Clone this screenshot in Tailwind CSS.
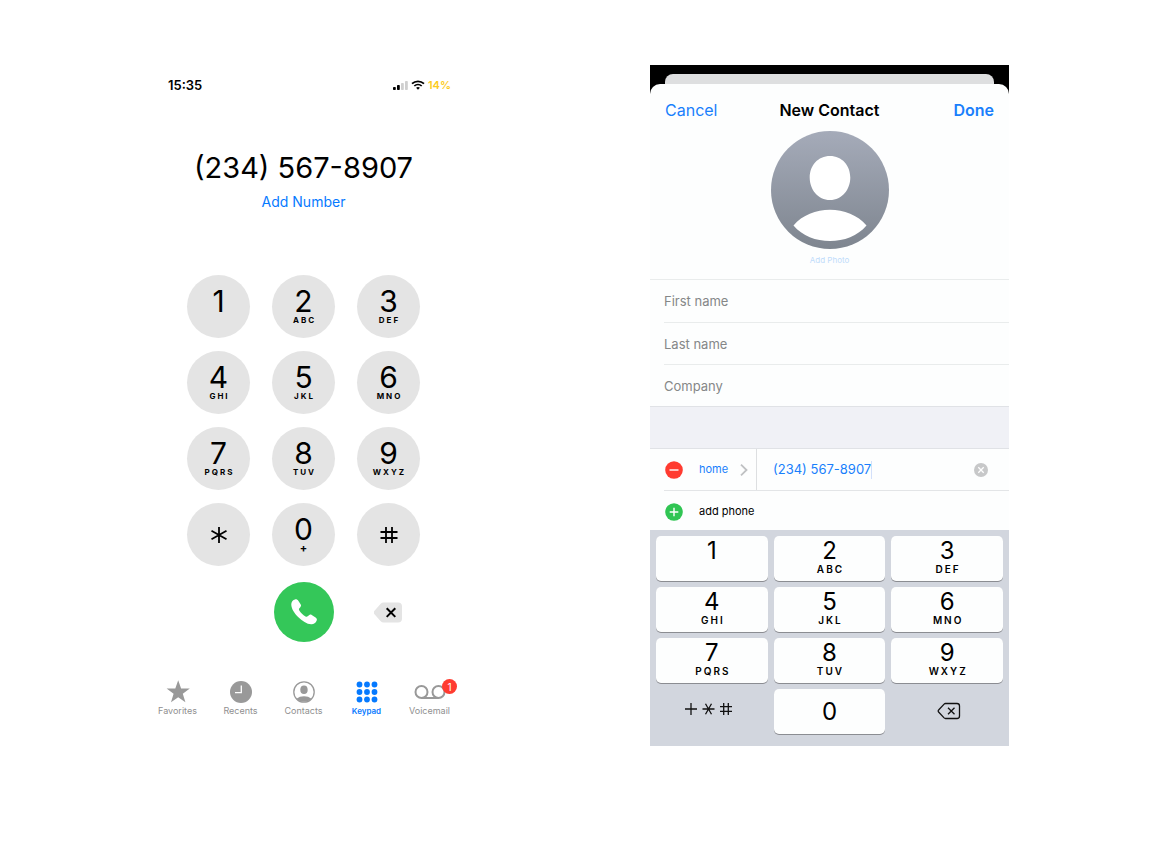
<!DOCTYPE html>
<html lang="en">
<head>
<meta charset="utf-8">
<meta name="viewport" content="width=device-width, initial-scale=1">
<title>Phone keypad and new contact</title>
<script src="https://cdn.jsdelivr.net/npm/@tailwindcss/browser@4"></script>
</head>
<body class="bg-white font-['Inter',sans-serif] text-black">
<main class="flex flex-wrap justify-center gap-x-[189px] gap-y-12 py-[65px]">

  <!-- Dialer -->
  <section class="flex w-full max-w-[315px] flex-col" aria-label="Keypad">
    <header class="flex items-center justify-between pt-3 pr-[10px] pl-[22px] text-[13px] leading-4 font-semibold">
      <time>15:35</time>
      <div class="flex items-center gap-[3px]">
        <svg class="h-[10px] w-4" viewBox="0 0 16 10" aria-hidden="true">
          <rect x="1" y="7" width="2.8" height="3" rx=".8"/><rect x="5" y="5" width="2.8" height="5" rx=".8"/>
          <rect x="9" y="3" width="2.8" height="7" rx=".8" fill="#cfcfcf"/><rect x="13" y="1" width="2.8" height="9" rx=".8" fill="#cfcfcf"/>
        </svg>
        <svg class="h-[10px] w-[14px]" viewBox="0 0 14 10" fill="none" stroke="#000" aria-hidden="true">
          <path d="M1 3.7C4.4.5 9.6.5 13 3.7" stroke-width="1.8"/><path d="M3.3 6c2.1-2 5.3-2 7.4 0" stroke-width="1.7"/><path d="M5.1 7.8c1.1-1 2.7-1 3.8 0L7 9.8z" fill="#000" stroke="none"/>
        </svg>
        <span class="text-[11px] text-[#fccb1d]">14%</span>
      </div>
    </header>

    <div class="mt-[57px] text-center">
      <p class="text-[29px] leading-9">(234) 567-8907</p>
      <button class="mt-[6px] block w-full text-sm leading-5 text-[#067aff]">Add Number</button>
    </div>

    <div class="mt-[63px] grid grid-cols-[repeat(3,63px)] justify-center gap-x-[22px] gap-y-[13px]">
      <button class="flex h-[63px] flex-col items-center rounded-full bg-[#e4e4e4] pt-[11px] text-[30px] leading-[30px]">1</button>
      <button class="flex h-[63px] flex-col items-center rounded-full bg-[#e4e4e4] pt-[11px] text-[30px] leading-[30px]">2<span class="pl-[2px] text-[8px] leading-2 font-bold tracking-[2px]">ABC</span></button>
      <button class="flex h-[63px] flex-col items-center rounded-full bg-[#e4e4e4] pt-[11px] text-[30px] leading-[30px]">3<span class="pl-[2px] text-[8px] leading-2 font-bold tracking-[2px]">DEF</span></button>
      <button class="flex h-[63px] flex-col items-center rounded-full bg-[#e4e4e4] pt-[11px] text-[30px] leading-[30px]">4<span class="pl-[2px] text-[8px] leading-2 font-bold tracking-[2px]">GHI</span></button>
      <button class="flex h-[63px] flex-col items-center rounded-full bg-[#e4e4e4] pt-[11px] text-[30px] leading-[30px]">5<span class="pl-[2px] text-[8px] leading-2 font-bold tracking-[2px]">JKL</span></button>
      <button class="flex h-[63px] flex-col items-center rounded-full bg-[#e4e4e4] pt-[11px] text-[30px] leading-[30px]">6<span class="pl-[2px] text-[8px] leading-2 font-bold tracking-[2px]">MNO</span></button>
      <button class="flex h-[63px] flex-col items-center rounded-full bg-[#e4e4e4] pt-[11px] text-[30px] leading-[30px]">7<span class="pl-[2px] text-[8px] leading-2 font-bold tracking-[2px]">PQRS</span></button>
      <button class="flex h-[63px] flex-col items-center rounded-full bg-[#e4e4e4] pt-[11px] text-[30px] leading-[30px]">8<span class="pl-[2px] text-[8px] leading-2 font-bold tracking-[2px]">TUV</span></button>
      <button class="flex h-[63px] flex-col items-center rounded-full bg-[#e4e4e4] pt-[11px] text-[30px] leading-[30px]">9<span class="pl-[2px] text-[8px] leading-2 font-bold tracking-[2px]">WXYZ</span></button>
      <button class="flex h-[63px] items-center justify-center rounded-full bg-[#e4e4e4]" aria-label="Star">
        <svg class="size-[18px]" viewBox="0 0 18 18" stroke="#000" stroke-width="1.8" aria-hidden="true"><path d="M9 1v16M1.500 4.700l15 8.600M16.500 4.700l-15 8.600"/></svg>
      </button>
      <button class="flex h-[63px] flex-col items-center rounded-full bg-[#e4e4e4] pt-[11px] text-[30px] leading-[30px]">0<span class="text-[11px] leading-2 font-bold">+</span></button>
      <button class="flex h-[63px] items-center justify-center rounded-full bg-[#e4e4e4]" aria-label="Pound">
        <svg class="size-[18px]" viewBox="0 0 18 18" stroke="#000" stroke-width="1.8" aria-hidden="true"><path d="M6 1v16M12 1v16M.5 6h17M.5 12h17"/></svg>
      </button>
    </div>

    <div class="mt-4 grid grid-cols-[repeat(3,63px)] items-center justify-center gap-x-[22px]">
      <button class="col-start-2 flex size-[60px] items-center justify-center justify-self-center rounded-full bg-[#34c759]" aria-label="Call">
        <svg class="size-[26px]" viewBox="0 0 26 26" fill="#fff" aria-hidden="true"><path d="M.3 5C.4 2.700 2 .8 4 .4c1.400-.3 2.500.2 3.300 1.400l2.300 3.500c.7 1.100.5 2-.3 2.900L8.400 9.200c-.6.7-.6 1.400-.1 2.200 1.500 2.400 3.600 4.400 6.200 6 .8.5 1.500.5 2.200-.1l1.300-1.100c.8-.7 1.700-.8 2.700-.2l3.900 2.400c1.300.8 1.600 1.900 1 3.300-.9 2.300-3 3.800-5.500 3.600-4.200-.4-9-3.400-13-7.400C3 13.800.1 9 .3 5Z"/></svg>
      </button>
      <button class="flex justify-center pr-[2px]" aria-label="Delete">
        <svg class="h-[21px] w-7" viewBox="0 0 28 21" aria-hidden="true"><path d="M9.500.5H24a4 4 0 0 1 4 4v12a4 4 0 0 1-4 4H9.500a4 4 0 0 1-2.800-1.200L.7 12.400a2.700 2.700 0 0 1 0-3.800l6-6.900A4 4 0 0 1 9.500.5Z" fill="#e4e4e4"/><path d="m12.700 6.300 8.600 8.600m0-8.600-8.600 8.600" stroke="#000" stroke-width="2"/></svg>
      </button>
    </div>

    <nav class="mt-[38px] grid grid-cols-5 text-center text-[9px] leading-3 text-[#8f8f8f]" aria-label="Tabs">
      <a href="#favorites" class="flex flex-col items-center gap-[1px]">
        <svg class="size-6" viewBox="0 0 24 24" fill="#999" aria-hidden="true"><path d="m12.200.2 2.900 8.300 8.700.1-7 5.200 2.600 8.500-7.200-5-7.200 5 2.600-8.500-7-5.200 8.700-.1z"/></svg>Favorites</a>
      <a href="#recents" class="flex flex-col items-center gap-[1px]">
        <svg class="size-6" viewBox="0 0 24 24" aria-hidden="true"><circle cx="12" cy="12" r="11" fill="#999"/><path d="M12.300 5.500v7.200H6" fill="none" stroke="#fff" stroke-width="1.300"/></svg>Recents</a>
      <a href="#contacts" class="flex flex-col items-center gap-[1px]">
        <svg class="size-6" viewBox="0 0 24 24" aria-hidden="true"><circle cx="12" cy="12" r="10.200" fill="none" stroke="#999" stroke-width="1.300"/><ellipse cx="12" cy="9.800" rx="3.700" ry="4.300" fill="#999"/><path d="M4.700 18.600c3.500-3.300 11.100-3.300 14.600 0A9.800 9.800 0 0 1 4.700 18.600Z" fill="#999"/></svg>Contacts</a>
      <a href="#keypad" class="flex flex-col items-center gap-[1px] text-[8px] leading-3 font-semibold text-[#067aff]" aria-current="page">
        <svg class="size-6" viewBox="0 0 24 24" fill="#067aff" aria-hidden="true"><circle cx="4.500" cy="4.500" r="2.900"/><circle cx="12" cy="4.500" r="2.900"/><circle cx="19.500" cy="4.500" r="2.900"/><circle cx="4.500" cy="12" r="2.900"/><circle cx="12" cy="12" r="2.900"/><circle cx="19.500" cy="12" r="2.900"/><circle cx="4.500" cy="19.500" r="2.900"/><circle cx="12" cy="19.500" r="2.900"/><circle cx="19.500" cy="19.500" r="2.900"/></svg>Keypad</a>
      <a href="#voicemail" class="relative flex flex-col items-center gap-[1px]">
        <svg class="h-6 w-8" viewBox="0 0 32 24" fill="none" stroke="#999" stroke-width="2" aria-hidden="true"><circle cx="7.500" cy="12" r="6"/><circle cx="24.500" cy="12" r="6"/><path d="M7.500 18h17"/></svg>Voicemail
        <span class="absolute -top-[1px] right-1 flex size-[15px] items-center justify-center rounded-full bg-[#ff3b30] text-[10px] text-white">1</span></a>
    </nav>
  </section>

  <!-- New contact sheet -->
  <section class="w-full max-w-[359px] bg-black pt-[9px]" aria-label="New Contact">
    <div class="mx-[15px] h-[10px] rounded-t-lg bg-[#dedfe0]"></div>
    <form class="rounded-t-[10px] bg-[#fdfefe]">
      <header class="grid grid-cols-3 items-center px-[15px] pt-[14px] text-base leading-6">
        <button type="button" class="justify-self-start text-[#197ffc]">Cancel</button>
        <h1 class="text-center font-semibold whitespace-nowrap">New Contact</h1>
        <button type="submit" class="justify-self-end font-semibold text-[#197ffc]">Done</button>
      </header>
      <div class="flex flex-col items-center gap-[7px] pt-[9px] pb-[15px]">
        <svg class="size-[118px]" viewBox="0 0 118 118" role="img" aria-label="Contact photo">
          <defs><linearGradient id="avatar" x2="0" y2="1"><stop stop-color="#a5abb9"/><stop offset="1" stop-color="#7e858f"/></linearGradient></defs>
          <circle cx="59" cy="59" r="59" fill="url(#avatar)"/>
          <path d="M59 25c12 0 20.300 9.500 20.300 21.500S71 69 59 69s-20.300-10.500-20.300-22.500S47 25 59 25ZM22.500 94.500C40 73.500 78 73.500 95.500 94.500 78 115.300 40 115.300 22.500 94.500Z" fill="#fff"/>
        </svg>
        <button type="button" class="text-[8px] leading-2 text-[#bfdcfb]">Add Photo</button>
      </div>

      <div class="border-t border-[#e9ecec] pl-[14px] text-[13px]">
        <input aria-label="First name" placeholder="First name" class="block h-[42px] w-full outline-none placeholder:text-[#858788]">
        <input aria-label="Last name" placeholder="Last name" class="block h-[42px] w-full border-t border-[#e9ecec] outline-none placeholder:text-[#858788]">
        <input aria-label="Company" placeholder="Company" class="block h-[42px] w-full border-t border-[#e9ecec] outline-none placeholder:text-[#858788]">
      </div>
      <div class="h-[43px] border-y border-[#e0e2e6] bg-[#f0f1f6]"></div>

      <div class="pl-[14px]">
        <div class="flex h-[42px] items-center border-b border-[#e3e5e7]">
          <button type="button" aria-label="Remove phone"><svg class="size-5" viewBox="0 0 20 20" aria-hidden="true"><circle cx="10" cy="10" r="8.800" fill="#ff3b30"/><path d="M5.500 10h9" stroke="#fff" stroke-width="1.400"/></svg></button>
          <button type="button" class="ml-[15px] flex w-[49px] items-center justify-between text-[11px] text-[#197ffc]">home
            <svg class="h-3 w-2" viewBox="0 0 8 12" fill="none" stroke="#bfc1c3" stroke-width="1.800" aria-hidden="true"><path d="m1 .7 5.500 5.300L1 11.300"/></svg></button>
          <div class="ml-2 flex flex-1 items-center self-stretch border-l border-[#dddfe1] pl-4">
            <input type="tel" aria-label="Phone" value="(234) 567-8907" class="field-sizing-content text-[13px] text-[#197ffc] outline-none">
            <span class="h-[18px] w-px bg-[#d3e0fa]"></span>
          </div>
          <button type="button" class="mr-5" aria-label="Clear text"><svg class="size-4" viewBox="0 0 16 16" aria-hidden="true"><circle cx="8" cy="8" r="7" fill="#c7c8c9"/><path d="m5.300 5.300 5.400 5.400m0-5.400-5.400 5.400" stroke="#fff" stroke-width="1.300"/></svg></button>
        </div>
        <button type="button" class="flex h-[39px] items-center gap-[15px] pt-[2px] text-[11px]">
          <svg class="size-5" viewBox="0 0 20 20" aria-hidden="true"><circle cx="10" cy="10" r="8.800" fill="#30c553"/><path d="M5.700 10h8.600M10 5.700v8.600" stroke="#fff" stroke-width="1.400"/></svg>add phone</button>
      </div>

      <div class="grid grid-cols-3 gap-[6px] bg-[#d2d6de] px-[6px] pt-[6px] pb-3">
        <button type="button" class="flex h-[45px] flex-col items-center rounded-[5px] bg-[#fdfefe] pt-[3px] text-2xl leading-6 shadow-[0_1px_0_#8b8d92]">1</button>
        <button type="button" class="flex h-[45px] flex-col items-center rounded-[5px] bg-[#fdfefe] pt-[3px] text-2xl leading-6 shadow-[0_1px_0_#8b8d92]">2<span class="pl-[2px] text-[10px] leading-3 font-semibold tracking-[2px]">ABC</span></button>
        <button type="button" class="flex h-[45px] flex-col items-center rounded-[5px] bg-[#fdfefe] pt-[3px] text-2xl leading-6 shadow-[0_1px_0_#8b8d92]">3<span class="pl-[2px] text-[10px] leading-3 font-semibold tracking-[2px]">DEF</span></button>
        <button type="button" class="flex h-[45px] flex-col items-center rounded-[5px] bg-[#fdfefe] pt-[3px] text-2xl leading-6 shadow-[0_1px_0_#8b8d92]">4<span class="pl-[2px] text-[10px] leading-3 font-semibold tracking-[2px]">GHI</span></button>
        <button type="button" class="flex h-[45px] flex-col items-center rounded-[5px] bg-[#fdfefe] pt-[3px] text-2xl leading-6 shadow-[0_1px_0_#8b8d92]">5<span class="pl-[2px] text-[10px] leading-3 font-semibold tracking-[2px]">JKL</span></button>
        <button type="button" class="flex h-[45px] flex-col items-center rounded-[5px] bg-[#fdfefe] pt-[3px] text-2xl leading-6 shadow-[0_1px_0_#8b8d92]">6<span class="pl-[2px] text-[10px] leading-3 font-semibold tracking-[2px]">MNO</span></button>
        <button type="button" class="flex h-[45px] flex-col items-center rounded-[5px] bg-[#fdfefe] pt-[3px] text-2xl leading-6 shadow-[0_1px_0_#8b8d92]">7<span class="pl-[2px] text-[10px] leading-3 font-semibold tracking-[2px]">PQRS</span></button>
        <button type="button" class="flex h-[45px] flex-col items-center rounded-[5px] bg-[#fdfefe] pt-[3px] text-2xl leading-6 shadow-[0_1px_0_#8b8d92]">8<span class="pl-[2px] text-[10px] leading-3 font-semibold tracking-[2px]">TUV</span></button>
        <button type="button" class="flex h-[45px] flex-col items-center rounded-[5px] bg-[#fdfefe] pt-[3px] text-2xl leading-6 shadow-[0_1px_0_#8b8d92]">9<span class="pl-[2px] text-[10px] leading-3 font-semibold tracking-[2px]">WXYZ</span></button>
        <button type="button" class="flex h-[45px] items-center justify-center pr-2 pb-[6px]" aria-label="Plus, star, pound">
          <svg class="h-[14px] w-12" viewBox="0 0 48 14" stroke="#111" stroke-width="1.300" aria-hidden="true"><path d="M1 7h12M7 1v12M18.500 7h12M21.500 1.700l6 10.600M27.500 1.700l-6 10.600M36 4.700h12M36 9.300h12M39.700 1v12M44.300 1v12"/></svg>
        </button>
        <button type="button" class="flex h-[45px] items-center justify-center rounded-[5px] bg-[#fdfefe] text-2xl leading-6 shadow-[0_1px_0_#8b8d92]">0</button>
        <button type="button" class="flex h-[45px] items-center justify-center pb-[2px] pl-1" aria-label="Delete">
          <svg class="h-[18px] w-6" viewBox="0 0 24 18" fill="none" stroke="#111" stroke-width="1.300" aria-hidden="true"><path d="M8.500 1.500H20a2.500 2.500 0 0 1 2.500 2.500v10a2.500 2.500 0 0 1-2.500 2.500H8.500a2 2 0 0 1-1.400-.6L1.600 10a1.400 1.400 0 0 1 0-2l5.500-5.900a2 2 0 0 1 1.400-.6ZM11 5.700l6.500 6.600M17.500 5.700 11 12.300"/></svg>
        </button>
      </div>
    </form>
  </section>
</main>
</body>
</html>
